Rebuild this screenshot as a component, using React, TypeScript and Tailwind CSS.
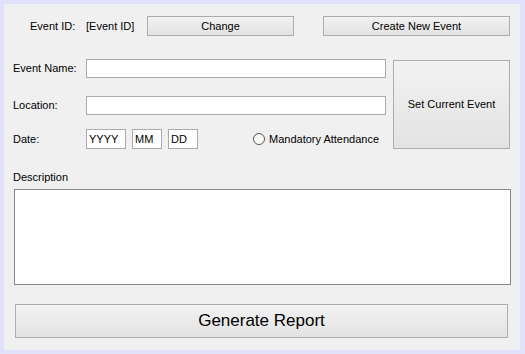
import React from "react";

const font = { fontFamily: '"Liberation Sans", Arial, sans-serif' };

export default function App() {
  return (
    <div className="w-[525px] h-[354px] bg-[#e1e1fb] pt-[4px] pl-[4px] pr-[5px] pb-[4px]">
      <div
        className="h-full bg-[#f0f0f0] text-[11px] text-black flex flex-col whitespace-nowrap"
        style={font}
      >
        {/* top row */}
        <div className="flex items-center h-[20px] mt-[12px]">
          <span className="ml-[26px] w-[56px]">Event ID:</span>
          <span className="w-[61px]">[Event ID]</span>
          <button className="w-[147px] h-[20px] border border-[#adadad] bg-gradient-to-b from-[#f2f2f2] to-[#e3e3e3]">
            Change
          </button>
          <button className="ml-[29px] w-[187px] h-[20px] border border-[#adadad] bg-gradient-to-b from-[#f2f2f2] to-[#e3e3e3]">
            Create New Event
          </button>
        </div>

        {/* fields + set current */}
        <div className="flex mt-[23px]">
          <div className="flex flex-col w-[382px] shrink-0">
            <div className="flex items-center h-[19px]">
              <span className="ml-[9px] w-[73px]">Event Name:</span>
              <div className="w-[300px] h-[19px] bg-white border border-[#ababab]" />
            </div>
            <div className="flex items-center h-[19px] mt-[18px]">
              <span className="ml-[9px] w-[73px]">Location:</span>
              <div className="w-[300px] h-[19px] bg-white border border-[#ababab]" />
            </div>
            <div className="flex items-center h-[20px] mt-[14px]">
              <span className="ml-[9px] w-[73px] shrink-0">Date:</span>
              <div className="w-[40px] h-[20px] bg-white border border-[#ababab] pl-[2px] leading-[18px] shrink-0">YYYY</div>
              <div className="ml-[6px] w-[30px] h-[20px] bg-white border border-[#ababab] pl-[2px] leading-[18px] shrink-0">MM</div>
              <div className="ml-[6px] w-[30px] h-[20px] bg-white border border-[#ababab] pl-[2px] leading-[18px] shrink-0">DD</div>
              <span className="ml-[55px] w-[12px] h-[12px] rounded-full border border-[#555] bg-gradient-to-b from-[#f4f4f4] to-[#ffffff] shrink-0" />
              <span className="ml-[4px]">Mandatory Attendance</span>
            </div>
          </div>
          <button className="ml-[7px] mt-[1px] w-[117px] h-[89px] border border-[#adadad] bg-gradient-to-b from-[#f2f2f2] to-[#e3e3e3]">
            Set Current Event
          </button>
        </div>

        <div className="ml-[9px] mt-[21px] h-[14px] leading-[14px]">Description</div>
        <div className="ml-[10px] mt-[5px] w-[497px] h-[96px] bg-white border border-[#828790]" />

        <button className="ml-[11px] mt-[19px] w-[493px] h-[34px] border border-[#adadad] bg-gradient-to-b from-[#f2f2f2] to-[#e3e3e3] text-[17px]">
          Generate Report
        </button>
      </div>
    </div>
  );
}
